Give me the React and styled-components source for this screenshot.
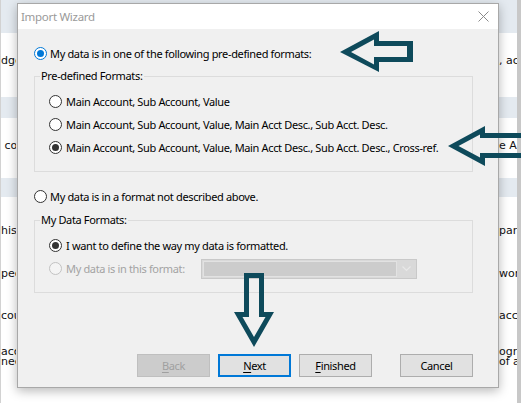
import React from 'react';
import styled, { createGlobalStyle } from 'styled-components';

const Global = createGlobalStyle`
  html, body { margin: 0; padding: 0; background: #fff; }
  body { width: 521px; height: 403px; overflow: hidden; }
  * { box-sizing: border-box; }
`;

const Screen = styled.div`
  position: relative;
  width: 521px;
  height: 403px;
  overflow: hidden;
  display: flex;
  border-left: 1px solid #d2d2d2;
  font-family: "DejaVu Sans", Verdana, sans-serif;
`;

const Sheet = styled.div`
  flex: 1;
  display: flex;
  flex-direction: column;
`;

const ScrollEdge = styled.div`
  width: 4px;
  background: #c8c8c8;
`;

const SheetRow = styled.div`
  height: ${(p) => p.$h}px;
  flex: none;
  background: ${(p) => (p.$band ? '#e4eaf0' : '#fff')};
  display: flex;
  justify-content: space-between;
  padding-top: ${(p) => p.$pt || 0}px;
  font-size: 11px;
  line-height: ${(p) => p.$lh || 13}px;
  color: #111;
`;

const Edge = styled.div`
  width: ${(p) => p.$w}px;
  overflow: hidden;
  white-space: pre;
  padding-left: ${(p) => p.$pl || 0}px;
`;

const Dialog = styled.div`
  position: absolute;
  left: 16px;
  top: 3px;
  width: 482px;
  height: 385px;
  border: 1px solid #a8a8a8;
  box-shadow: 0 3px 10px rgba(0, 0, 0, 0.28);
  background: #f0f0f0;
  display: flex;
  flex-direction: column;
  font-family: "Noto Sans", sans-serif;
  font-size: 11px;
  letter-spacing: -0.35px;
  color: #000;
`;

const TitleBar = styled.div`
  height: 25px;
  flex: none;
  background: #fff;
  display: flex;
  align-items: center;
  justify-content: space-between;
  padding-left: 3px;
  font-size: 11.5px;
  letter-spacing: -0.3px;
  color: #9a9a9a;
`;

const CloseBox = styled.div`
  width: 29px;
  height: 25px;
  display: flex;
  align-items: center;
  justify-content: center;
`;

const Body = styled.div`
  flex: 1;
  display: flex;
  flex-direction: column;
  padding: 14px 25px 10px 16px;
`;

const OptionRow = styled.div`
  height: ${(p) => p.$h || 20}px;
  margin-top: ${(p) => p.$mt || 0}px;
  display: flex;
  align-items: center;
  gap: 3px;
  white-space: nowrap;
  color: ${(p) => (p.$disabled ? '#a3a3a3' : '#000')};
`;

const Radio = styled.span`
  flex: none;
  width: 13px;
  height: 13px;
  border-radius: 50%;
  border: 1px solid
    ${(p) => (p.$state === 'focus' ? '#0078d7' : p.$state === 'disabled' ? '#c2c2c2' : '#333')};
  background: ${(p) => (p.$state === 'disabled' ? '#f4f4f4' : '#fff')};
  display: flex;
  align-items: center;
  justify-content: center;
  &::after {
    content: '';
    width: 7px;
    height: 7px;
    border-radius: 50%;
    display: ${(p) => (p.$checked ? 'block' : 'none')};
    background: ${(p) => (p.$state === 'focus' ? '#0078d7' : '#333')};
  }
`;

const Group = styled.fieldset`
  margin: ${(p) => p.$mt}px 0 0;
  padding: ${(p) => p.$pt}px 0 ${(p) => p.$pb}px 14px;
  border: 1px solid #dcdcdc;
  min-width: 0;
`;

const Legend = styled.legend`
  margin-left: -9px;
  padding: 0 1px;
  font-size: 11px;
  line-height: 16px;
`;

const InnerRow = styled.div`
  height: 23px;
  display: ${(p) => (p.$grid ? 'grid' : 'flex')};
  grid-template-columns: 13px 131px 216px;
  align-items: center;
  gap: 4px;
  white-space: nowrap;
  color: ${(p) => (p.$disabled ? '#a3a3a3' : '#000')};
`;

const Combo = styled.div`
  height: 20px;
  display: flex;
  border: 1px solid #c9c9c9;
  background: #d9d9d9;
  padding: 1px;
`;

const ComboField = styled.div`
  flex: 1;
  background: #cccccc;
  border: 1px solid #e2e2e2;
`;

const ComboButton = styled.div`
  width: 18px;
  display: flex;
  align-items: center;
  justify-content: center;
`;

const ButtonRow = styled.div`
  margin-top: auto;
  display: flex;
  justify-content: flex-end;
  gap: 8px;
`;

const Button = styled.div`
  width: 73px;
  height: 23px;
  margin-left: ${(p) => p.$ml || 0}px;
  display: flex;
  align-items: center;
  justify-content: center;
  background: ${(p) => (p.$disabled ? '#cccccc' : '#e1e1e1')};
  border: ${(p) => (p.$default ? '2px solid #0078d7' : p.$disabled ? '1px solid #bfbfbf' : '1px solid #adadad')};
  color: ${(p) => (p.$disabled ? '#a0a0a0' : '#000')};
  font-size: 11px;
  u { text-decoration-thickness: 1px; text-underline-offset: 2px; }
`;

const Annotations = styled.svg`
  position: absolute;
  left: 0;
  top: 0;
  width: 521px;
  height: 403px;
  pointer-events: none;
`;

const ARROW = '#0e4a5b';

const sheetRows = [
  { h: 33, band: true },
  { h: 64, pt: 21, left: 'dge', right: ', ac' },
  { h: 21, band: true },
  { h: 60, pt: 21, left: ' co', right: 'e A' },
  { h: 19, band: true },
  { h: 55, pt: 27, left: 'his', right: 'para' },
  { h: 42, pt: 15, left: 'pec', right: 'worl' },
  { h: 40, pt: 15, left: 'cou', right: 'acco' },
  { h: 69, pt: 13, lh: 10, left: 'acc\nnee', right: 'ogra\nof a' },
];

export default function App() {
  return (
    <>
      <Global />
      <Screen>
        <Sheet>
          {sheetRows.map((r, i) => (
            <SheetRow key={i} $h={r.h} $band={r.band} $pt={r.pt} $lh={r.lh}>
              <Edge $w={15}>{r.left || ''}</Edge>
              <Edge $w={19} $pl={1}>{r.right || ''}</Edge>
            </SheetRow>
          ))}
        </Sheet>
        <ScrollEdge />

        <Dialog>
          <TitleBar>
            <span>Import Wizard</span>
            <CloseBox>
              <svg width="11" height="11" viewBox="0 0 11 11">
                <path d="M0.5 0.5 L10.5 10.5 M10.5 0.5 L0.5 10.5" stroke="#8a8a8a" strokeWidth="1" fill="none" />
              </svg>
            </CloseBox>
          </TitleBar>
          <Body>
            <OptionRow>
              <Radio $checked $state="focus" />
              <span>My data is in one of the following pre-defined formats:</span>
            </OptionRow>
            <Group $mt={5} $pt={6} $pb={12}>
              <Legend>Pre-defined Formats:</Legend>
              <InnerRow>
                <Radio />
                <span>Main Account, Sub Account, Value</span>
              </InnerRow>
              <InnerRow>
                <Radio />
                <span>Main Account, Sub Account, Value, Main Acct Desc., Sub Acct. Desc.</span>
              </InnerRow>
              <InnerRow>
                <Radio $checked />
                <span>Main Account, Sub Account, Value, Main Acct Desc., Sub Acct. Desc., Cross-ref.</span>
              </InnerRow>
            </Group>
            <OptionRow $mt={14}>
              <Radio />
              <span>My data is in a format not described above.</span>
            </OptionRow>
            <Group $mt={6} $pt={6} $pb={12}>
              <Legend>My Data Formats:</Legend>
              <InnerRow>
                <Radio $checked />
                <span>I want to define the way my data is formatted.</span>
              </InnerRow>
              <InnerRow $grid $disabled>
                <Radio $state="disabled" />
                <span>My data is in this format:</span>
                <Combo>
                  <ComboField />
                  <ComboButton>
                    <svg width="9" height="6" viewBox="0 0 9 6">
                      <path d="M0.5 0.5 L4.5 4.5 L8.5 0.5" stroke="#e8e8e8" strokeWidth="1.2" fill="none" />
                    </svg>
                  </ComboButton>
                </Combo>
              </InnerRow>
            </Group>
            <ButtonRow>
              <Button $disabled>
                <span><u>B</u>ack</span>
              </Button>
              <Button $default>
                <span><u>N</u>ext</span>
              </Button>
              <Button>
                <span><u>F</u>inished</span>
              </Button>
              <Button $ml={20}>Cancel</Button>
            </ButtonRow>
          </Body>
        </Dialog>

        <Annotations viewBox="0 0 521 403">
          <path
            fillRule="evenodd"
            fill={ARROW}
            d="M339 52 L378 31 L378 41 L412 41 L412 62 L378 62 L378 72 Z M350 52 L373 39.5 L373 46 L406 46 L406 57 L373 57 L373 64.5 Z"
          />
          <path
            fillRule="evenodd"
            fill={ARROW}
            d="M447 146 L484 126 L484 133 L530 133 L530 158 L484 158 L484 166 Z M457.5 146 L479 134.5 L479 138 L530 138 L530 153 L479 153 L479 157.5 Z"
          />
          <path
            fillRule="evenodd"
            fill={ARROW}
            d="M243 273 L263 273 L263 312 L273 312 L253 347 L233 312 L243 312 Z M248 278 L258 278 L258 317 L264.5 317 L253 337 L241.5 317 L248 317 Z"
          />
        </Annotations>
      </Screen>
    </>
  );
}
